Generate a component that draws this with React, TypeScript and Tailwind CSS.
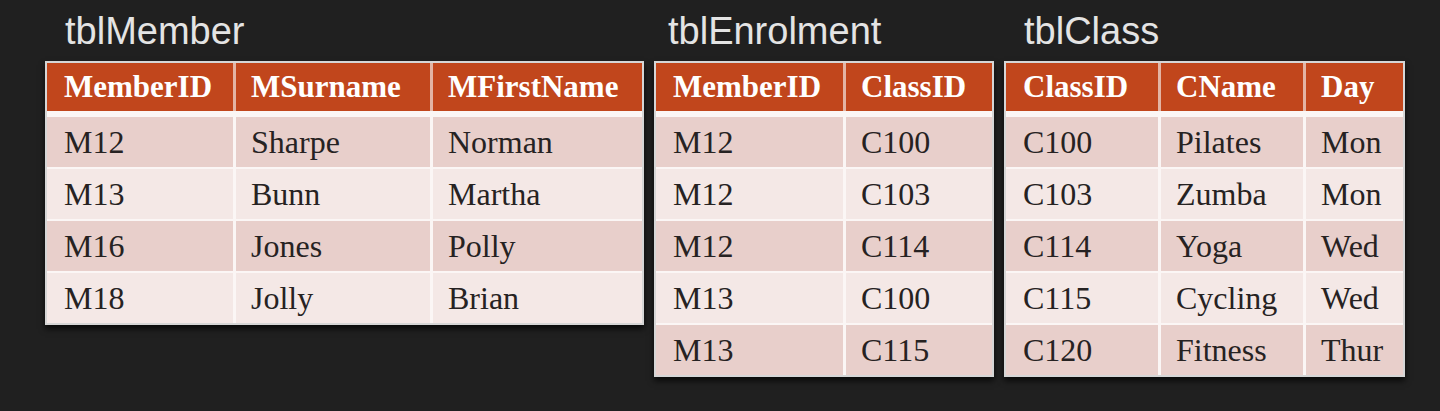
type Table = {
    title: string;
    titlePad: string;
    cols: string[];
    widths: string[];
    rows: string[][];
};

const tables: Table[] = [
    {
        title: "tblMember",
        titlePad: "pl-[20px]",
        cols: ["MemberID", "MSurname", "MFirstName"],
        widths: ["w-[186px]", "w-[194px]", "w-[209px]"],
        rows: [
            ["M12", "Sharpe", "Norman"],
            ["M13", "Bunn", "Martha"],
            ["M16", "Jones", "Polly"],
            ["M18", "Jolly", "Brian"],
        ],
    },
    {
        title: "tblEnrolment",
        titlePad: "pl-[14px]",
        cols: ["MemberID", "ClassID"],
        widths: ["w-[187px]", "w-[146px]"],
        rows: [
            ["M12", "C100"],
            ["M12", "C103"],
            ["M12", "C114"],
            ["M13", "C100"],
            ["M13", "C115"],
        ],
    },
    {
        title: "tblClass",
        titlePad: "pl-[20px]",
        cols: ["ClassID", "CName", "Day"],
        widths: ["w-[152px]", "w-[142px]", "w-[97px]"],
        rows: [
            ["C100", "Pilates", "Mon"],
            ["C103", "Zumba", "Mon"],
            ["C114", "Yoga", "Wed"],
            ["C115", "Cycling", "Wed"],
            ["C120", "Fitness", "Thur"],
        ],
    },
];

const DataTable: React.FC<{ t: Table }> = ({ t }) => {
    return (
        <div className="flex flex-col">
            <div
                className={`${t.titlePad} h-[38px] leading-[38px] mb-[11px] text-[38px] text-[#e4e4e4] font-['Liberation_Sans',Arial,sans-serif]`}
            >
                {t.title}
            </div>

            <div className="border-2 border-[#d6d6d6] bg-[#fbf6f5] shadow-[0_4px_6px_rgba(0,0,0,0.7)] font-['Liberation_Serif','Times_New_Roman',serif]">
                <div className="flex gap-[3px] bg-[#e3b4a4] mb-[6px]">
                    {t.cols.map((c, i) => (
                        <div
                            key={c}
                            className={`${t.widths[i]} ${i === 0 ? "pl-[17px]" : "pl-[15px]"} h-[48px] flex items-center bg-[#c1461c] text-white font-bold text-[31px]`}
                        >
                            {c}
                        </div>
                    ))}
                </div>

                <div className="flex flex-col gap-[2px]">
                    {t.rows.map((r, ri) => (
                        <div key={ri} className="flex gap-[3px]">
                            {r.map((cell, ci) => (
                                <div
                                    key={ci}
                                    className={`${t.widths[ci]} ${ci === 0 ? "pl-[17px]" : "pl-[15px]"} h-[50px] flex items-center text-[32px] text-[#262222] ${
                                        ri % 2 === 0 ? "bg-[#e8cfcb]" : "bg-[#f4e8e6]"
                                    }`}
                                >
                                    {cell}
                                </div>
                            ))}
                        </div>
                    ))}
                </div>
            </div>
        </div>
    );
};

export default function App() {
    return (
        <div className="w-[1440px] h-[411px] bg-[#202020] overflow-hidden">
            <div className="flex items-start gap-[10px] pl-[45px] pt-[12px]">
                {tables.map((t) => (
                    <DataTable key={t.title} t={t} />
                ))}
            </div>
        </div>
    );
}
